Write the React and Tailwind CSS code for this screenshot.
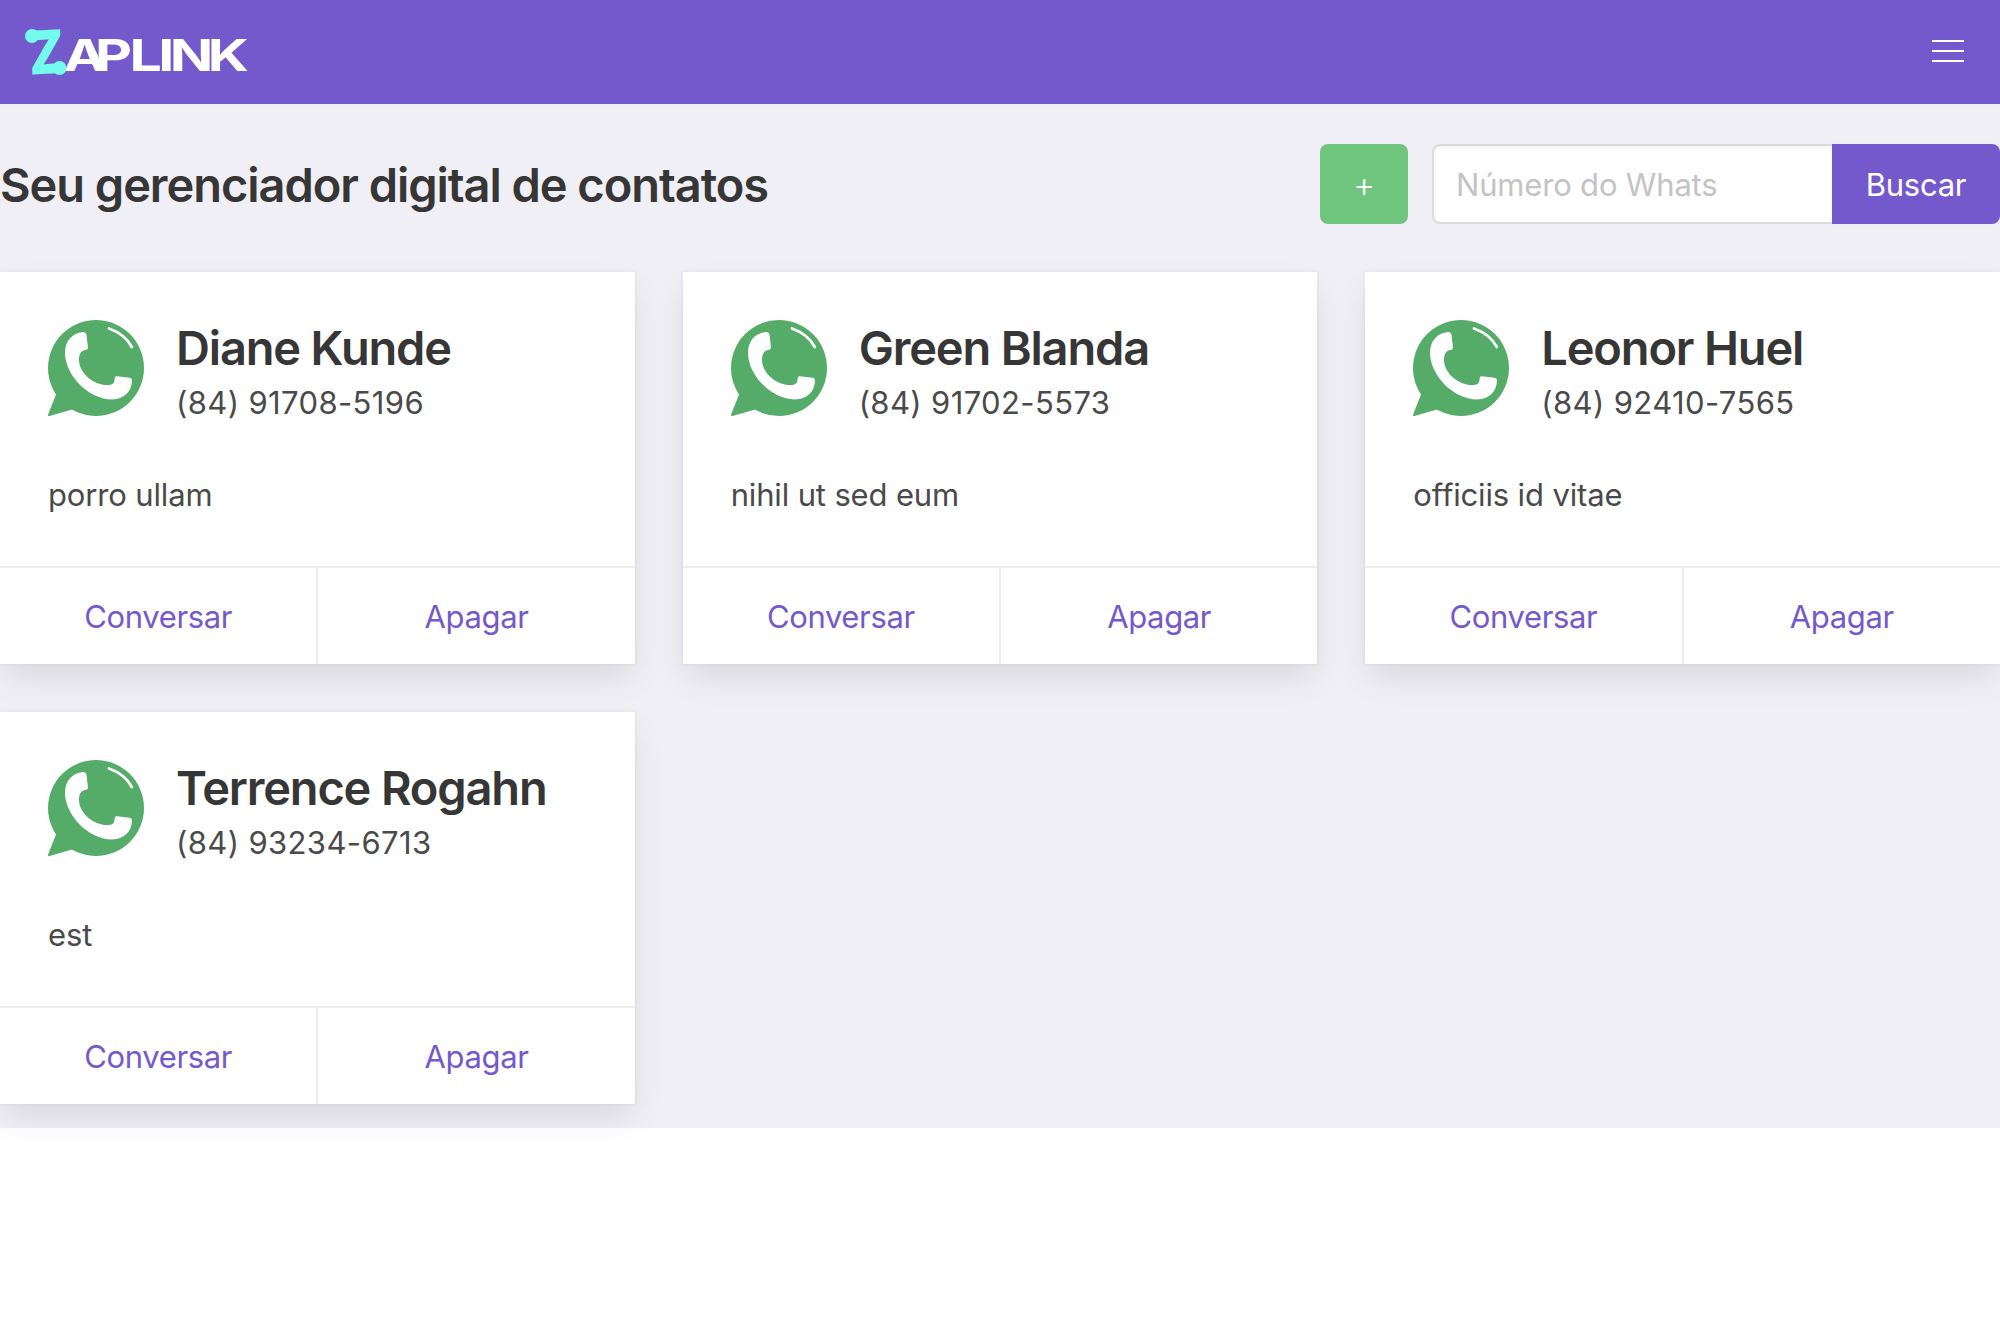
import React from "react";

const contacts = [
  { name: "Diane Kunde", phone: "(84) 91708-5196", note: "porro ullam" },
  { name: "Green Blanda", phone: "(84) 91702-5573", note: "nihil ut sed eum" },
  { name: "Leonor Huel", phone: "(84) 92410-7565", note: "officiis id vitae" },
  { name: "Terrence Rogahn", phone: "(84) 93234-6713", note: "est" },
];

function Logo({ className }) {
  return (
    <svg className={className} viewBox="0 0 260 104" aria-label="Zaplink">
      <text
        transform="scale(1.3 1)"
        x="48.9 73.1 99.6 121.8 130.6 159.8"
        y="71"
        fontSize="44"
        fontWeight="700"
        fill="#fff"
      >
        APLINK
      </text>
      <text transform="translate(30 74.5) skewY(-3) scale(0.78 1)" fontSize="60" fontWeight="900" fill="#73fced">
        Z
      </text>
      <circle cx="32" cy="36" r="7" fill="#73fced" />
      <circle cx="59.500" cy="68" r="7" fill="#73fced" />
    </svg>
  );
}

function WhatsIcon() {
  return (
    <svg className="size-24 shrink-0" viewBox="0 0 96 96">
      <circle cx="48" cy="48" r="48" fill="#55ab68" />
      <path d="M8 74.500L0.100 94.500Q-0.300 96.400 1.500 96L24 89.600L30 60Z" fill="#55ab68" />
      <path
        d="M35 12C24 13 17 21 17 33C17 54 39 79 64 79.500C76 79.500 84 71 84 60.500Q84 58 81.500 57.700L69 56.300Q66.600 56.100 66.600 58.500C66.600 62 65.500 64.500 61 65C46 66 31 53 31 40C31 34 33 30.500 37.500 30Q40 29.800 39.900 27L38.500 14.500Q38 11.800 35 12Z"
        fill="#fff"
      />
      <path d="M61 8.500C71 12 79 18 83.800 27" fill="none" stroke="#fff" strokeWidth="2.800" strokeLinecap="round" />
    </svg>
  );
}

function ContactCard({ name, phone, note }) {
  return (
    <article className="flex h-[392px] flex-col bg-white shadow-[0_16px_32px_-4px_rgba(10,10,10,0.1),0_0_0_2px_rgba(10,10,10,0.02)]">
      <div className="flex-1 px-12 pt-12">
        <div className="flex h-24 gap-8">
          <WhatsIcon />
          <div className="pt-px">
            <h2 className="w-max text-[47px] leading-[54px] font-semibold tracking-[-1.17px] text-[#363636]">{name}</h2>
            <p className="mt-1 w-max text-[31px] leading-[48px] tracking-[0.38px]">{phone}</p>
          </div>
        </div>
        <p className="mt-[55px] w-max text-[31px] leading-[48px] tracking-[-0.15px]">{note}</p>
      </div>
      <div className="flex h-[98px] shrink-0 border-t-2 border-[#ededed] text-[31px] tracking-[-0.36px] text-[#7459cc]">
        <a className="flex flex-1 items-center justify-center border-r-2 border-[#ededed] pt-0.5">Conversar</a>
        <a className="flex flex-1 items-center justify-center pt-0.5">Apagar</a>
      </div>
    </article>
  );
}

export default function App() {
  return (
    <div className="min-h-[1320px] bg-white font-['Inter',sans-serif] text-[#4a4a4a]">
      <header className="flex h-[104px] items-center justify-between bg-[#7459cc]">
        <Logo className="h-[104px] w-[260px]" />
        <div className="mr-9 mb-0.5 flex flex-col gap-2">
          <span className="h-0.5 w-8 bg-white" />
          <span className="h-0.5 w-8 bg-white" />
          <span className="h-0.5 w-8 bg-white" />
        </div>
      </header>
      <main className="h-[1024px] bg-[#f0eff5] pt-10">
        <div className="flex h-20 items-center">
          <h1 className="pt-0.5 text-[47px] leading-[54px] font-semibold tracking-[-1.05px] text-[#363636]">Seu gerenciador digital de contatos</h1>
          <button className="mr-6 ml-auto h-20 w-[88px] rounded-lg bg-[#70c57e] pt-px text-[34px] font-light text-white">+</button>
          <div className="flex h-20 w-[568px]">
            <div className="flex flex-1 items-center rounded-l-lg border-2 border-r-0 border-[#dbdbdb] bg-white pt-0.5 pl-[22px] text-[31px] tracking-[-0.18px] text-[#c3c3c3] shadow-[inset_0_2px_4px_rgba(10,10,10,0.05)]">Número do Whats</div>
            <button className="w-[168px] rounded-r-lg bg-[#7459cc] pt-0.5 text-[31px] tracking-[-0.25px] text-white">Buscar</button>
          </div>
        </div>
        <div className="mt-12 grid grid-cols-3 gap-12">
          {contacts.map((c) => (
            <ContactCard key={c.name} {...c} />
          ))}
        </div>
      </main>
    </div>
  );
}
